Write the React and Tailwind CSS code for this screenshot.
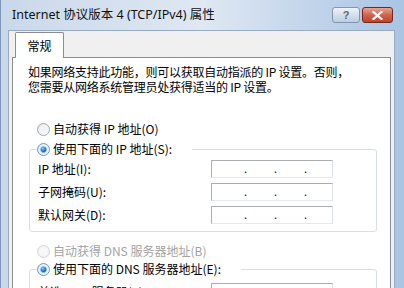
import { useId } from 'react';

const cjk = "font-['Noto_Sans_CJK_SC','Noto_Sans',sans-serif]";

function Radio({ checked = false, disabled = false }) {
  const id = useId().replace(/:/g, '');
  return (
    <svg width="13" height="13" viewBox="0 0 13 13" className="shrink-0">
      <defs>
        <linearGradient id={`f${id}`} x1="0" y1="0" x2="1" y2="1">
          <stop offset="0" stopColor="#e2e5e8" />
          <stop offset="1" stopColor="#fbfbfb" />
        </linearGradient>
        <radialGradient id={`d${id}`} cx="0.4" cy="0.35" r="0.7">
          <stop offset="0" stopColor="#8fcdf7" />
          <stop offset="0.5" stopColor="#2a7fd6" />
          <stop offset="1" stopColor="#0d4d9c" />
        </radialGradient>
      </defs>
      <circle
        cx="6.5"
        cy="6.5"
        r="6"
        fill={disabled ? '#f4f4f4' : `url(#f${id})`}
        stroke={disabled ? '#d2d2d2' : checked ? '#6e9cc8' : '#a3a8ad'}
      />
      <circle cx="6.5" cy="6.5" r="4.2" fill={disabled ? '#f7f7f7' : checked ? '#eaf4fc' : '#f1f3f5'} />
      {checked && <circle cx="6.5" cy="6.5" r="3.1" fill={`url(#d${id})`} stroke="#a9d3f4" strokeWidth="0.6" />}
    </svg>
  );
}

function RadioRow({ label, checked, disabled }) {
  return (
    <div className={`flex items-center gap-[3px] h-[16px] ${disabled ? 'text-[#a2a2a2]' : 'text-black'}`}>
      <Radio checked={checked} disabled={disabled} />
      <span className="leading-[16px] whitespace-nowrap">{label}</span>
    </div>
  );
}

function IpBox({ value = ['', '', '', ''] }) {
  return (
    <div className="w-[122px] h-[18px] border border-[#abadb3] border-b-[#e3e9ef] border-r-[#dbdfe6] bg-white flex items-center pl-[4px] text-[11px] leading-none">
      {value.map((v, i) => (
        <div key={i} className="flex items-end h-full">
          <span className="w-[29px] text-center self-center">{v}</span>
          {i < 3 && <span className="w-[1px] flex justify-center pb-[3px]">.</span>}
        </div>
      ))}
    </div>
  );
}

function FieldRow({ label, value }) {
  return (
    <div className="flex items-center h-[18px]">
      <span className="w-[181px] pl-[8px] whitespace-nowrap">{label}</span>
      <IpBox value={value} />
    </div>
  );
}

export default function App() {
  return (
    <div className="w-[404px] h-[288px] overflow-hidden flex flex-col border-l border-[#7c97ba] pl-[7px] pr-[9px] bg-gradient-to-r from-[#c9d8ea] via-[#dfe8f3] to-[#a9c4e4]">
      {/* title bar */}
      <div className="h-[30px] shrink-0 flex items-center justify-between pl-[4px] pr-[2px]">
        <span className="text-[12.5px] text-[#111] font-['Noto_Sans','Noto_Sans_CJK_SC',sans-serif] whitespace-nowrap">
          Internet 协议版本 4 (TCP/IPv4) 属性
        </span>
        <div className="flex items-center gap-[2px]">
          <div className="w-[28px] h-[16px] rounded-[3px] border border-[#8596ac] bg-gradient-to-b from-[#eef3f9] via-[#d3dfed] to-[#bccde1] flex items-center justify-center text-[11px] font-bold text-[#5a6a80] leading-none font-['Liberation_Sans',sans-serif]">
            ?
          </div>
          <div className="w-[31px] h-[16px] rounded-[3px] border border-[#6e2a1f] bg-gradient-to-b from-[#e6a493] via-[#d1634c] to-[#c2412a] flex items-center justify-center">
            <svg width="11" height="9" viewBox="0 0 11 9">
              <path d="M1.5 1 L9.5 8 M9.5 1 L1.5 8" stroke="#fff" strokeWidth="2.2" strokeLinecap="square" />
            </svg>
          </div>
        </div>
      </div>

      {/* client area */}
      <div className={`flex-1 flex flex-col bg-[#f0f0f0] border border-b-0 border-[#98aac2] px-[3px] pt-[1px] ${cjk} text-[12px] text-black`}>
        <div className="relative z-10 -mb-[1px] ml-[3px] w-[49px] h-[26px] bg-white border border-b-0 border-[#898c95] rounded-t-[2px] flex items-center justify-center">
          常规
        </div>
        <div className="flex-1 bg-white border border-[#898c95] pl-[15px] pt-[6px]">
          <p className="leading-[15px] whitespace-nowrap tracking-[-0.25px]">
            如果网络支持此功能，则可以获取自动指派的 IP 设置。否则，
            <br />
            您需要从网络系统管理员处获得适当的 IP 设置。
          </p>

          <div className="mt-[27px] pl-[9px]">
            <RadioRow label="自动获得 IP 地址(O)" />
          </div>

          <fieldset className="mt-[4px] ml-[1px] w-[348px] border border-[#d5dfe5] rounded-[3px] pt-[3px] pb-[7px] flex flex-col gap-[5px]">
            <legend className="ml-[7px] pr-[20px] h-[16px]">
              <RadioRow label="使用下面的 IP 地址(S):" checked />
            </legend>
            <FieldRow label="IP 地址(I):" />
            <FieldRow label="子网掩码(U):" />
            <FieldRow label="默认网关(D):" />
          </fieldset>

          <div className="mt-[11px] pl-[9px]">
            <RadioRow label="自动获得 DNS 服务器地址(B)" disabled />
          </div>

          <fieldset className="mt-[2px] ml-[1px] w-[348px] border border-[#d5dfe5] rounded-[3px] pt-[6px] pb-[7px] flex flex-col gap-[5px]">
            <legend className="ml-[7px] pr-[20px] h-[16px]">
              <RadioRow label="使用下面的 DNS 服务器地址(E):" checked />
            </legend>
            <FieldRow label="首选 DNS 服务器(P):" value={['8', '8', '8', '8']} />
            <FieldRow label="备用 DNS 服务器(A):" />
          </fieldset>
        </div>
      </div>
    </div>
  );
}
